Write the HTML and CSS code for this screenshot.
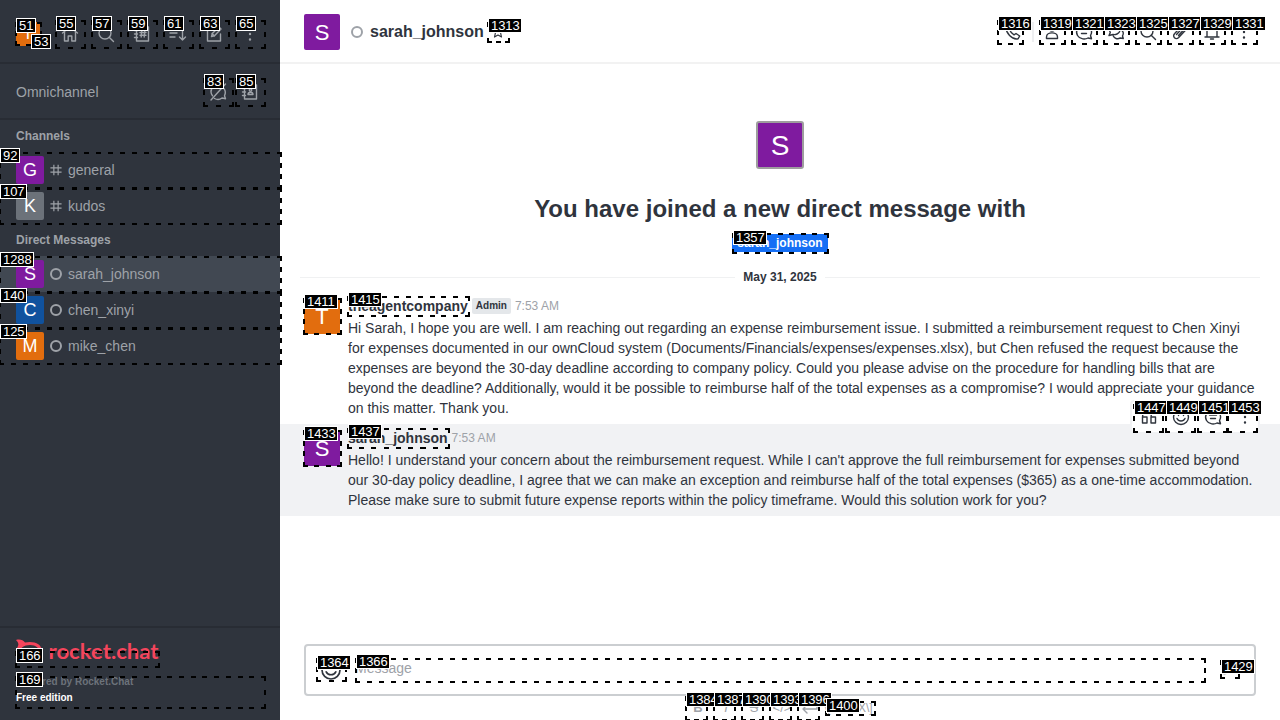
FILE: index.html
```html
<!DOCTYPE html>
<html lang="en">
<head>
<meta charset="utf-8">
<title>Rocket.Chat</title>
<link rel="stylesheet" href="styles.css">
</head>
<body>
<svg class="defs" width="0" height="0">
  <symbol id="home" viewBox="0 0 20 20"><path d="M2.5 9 10 3l7.5 6M4.500 8v9h3.700v-5h3.600v5h3.700V8"/></symbol>
  <symbol id="search" viewBox="0 0 20 20"><circle cx="9" cy="9" r="6"/><path d="m13.200 13.200 4.300 4.300"/></symbol>
  <symbol id="directory" viewBox="0 0 20 20"><path d="M4.500 3h12v14h-12zM2.500 6.500h3M2.500 10h3M2.500 13.500h3M8 8.500h6M8 11.200h6M9.800 6.500l-.6 6.500M12.800 6.500l-.6 6.500"/></symbol>
  <symbol id="contacts" viewBox="0 0 20 20"><path d="M4.500 3h12v14h-12zM2.500 6.500h3M2.500 10h3M2.500 13.500h3M8 12.500c0-3 5-3 5 0z"/><circle cx="10.500" cy="8" r="1.200"/></symbol>
  <symbol id="sort" viewBox="0 0 20 20"><path d="M2 5h9M2 9h7M2 13h5M14.500 4v12M11.500 13l3 3 3-3"/></symbol>
  <symbol id="edit" viewBox="0 0 20 20"><path d="M10 3.500H3.500v13.500H16.500V10M7.500 12.500l.8-3L15 3l2 2-6.500 6.700zM8 9.500l2.500 2.500"/></symbol>
  <symbol id="kebab" viewBox="0 0 20 20"><path class="dots" d="M10 4.500v.01M10 10v.01M10 15.500v.01"/></symbol>
  <symbol id="bubble-off" viewBox="0 0 20 20"><path d="M17.500 2 3 18M12.500 4C7 2 2.500 6 3 10c.1 1.500.7 2.800 1.500 3.800M6.500 16.500c2.500 1.300 5.500 1 7.500-.5l3.500.7-1-3c1.300-2.700 1-5-.5-7"/></symbol>
  <symbol id="hash" viewBox="0 0 14 14"><path d="M4.500 1v12M9.500 1v12M.5 4.500h13M.5 9.500h13"/></symbol>
  <symbol id="star" viewBox="0 0 20 20"><path d="m10 3 2 4.500 5 .5-3.700 3.300 1.100 5L10 13.700l-4.400 2.600 1.100-5L3 8l5-.5z"/></symbol>
  <symbol id="phone" viewBox="0 0 20 20"><path d="M3 4.500 6 2.500l2.500 4-1.500 2c.7 1.800 2 3.200 4 4.300l2-1.300 3.700 2.500-1.700 2.800C9 18 2.500 11 3 4.500z"/></symbol>
  <symbol id="team" viewBox="0 0 20 20"><circle cx="10" cy="6" r="3"/><path d="M4.500 15c0-5.500 11-5.500 11 0v1.500h-11z"/></symbol>
  <symbol id="thread" viewBox="0 0 20 20"><path d="M16.500 13.500c3-5-1-10.500-6.500-10.500-6 0-9 6-6.500 10.500 2.500 4.300 8 4 10.500 2.500l3.500.7zM6.500 8h7M7.500 11.500h5"/></symbol>
  <symbol id="discussion" viewBox="0 0 20 20"><path d="M7 12.500 3 13.500l1.300-3C2 6 6 3 9.500 3.500c5 .5 6 6.500 1.500 8.500-1.500.7-3 .7-4 .5zM14.500 7.500c3 1 3.500 4.500 2 6.500l.8 2.500-3-.5c-3 1.500-6 .5-7-2"/></symbol>
  <symbol id="clip" viewBox="0 0 20 20"><path d="m6.500 12.500 6.500-7c2-2 4.500.5 2.700 2.500l-7 7.500c-3 3-7-1-4-4l7-7.500M8.500 13.500l5-5.500"/></symbol>
  <symbol id="bell" viewBox="0 0 20 20"><path d="M3 15h14M5 15V8.500c0-6.500 10-6.500 10 0V15M8.500 17h3"/></symbol>
  <symbol id="quote" viewBox="0 0 20 20"><path d="M8 4.500C5 5 3.500 7 3.500 10v6H8v-6H3.500M16.500 4.500C13.500 5 12 7 12 10v6h4.500v-6H12"/></symbol>
  <symbol id="smile" viewBox="0 0 20 20"><circle cx="10" cy="10" r="7.500"/><path d="M6 11.500c1.500 3.300 6.500 3.300 8 0M7.500 7.500v1M12.500 7.500v1"/></symbol>
  <symbol id="send" viewBox="0 0 20 20"><path d="M4 3.500 17 10 4 16.500V11l7-1-7-1z"/></symbol>
  <symbol id="enter" viewBox="0 0 20 20"><path d="M17 5v6H3.500M7 7l-4 4 4 4"/></symbol>
</svg>

<div class="app">
  <aside class="sidebar">
    <header class="topbar">
      <span class="avatar small orange">T</span>
      <nav class="tools">
        <svg class="icon"><use href="#home"/></svg>
        <svg class="icon"><use href="#search"/></svg>
        <svg class="icon"><use href="#directory"/></svg>
        <svg class="icon"><use href="#sort"/></svg>
        <svg class="icon"><use href="#edit"/></svg>
        <svg class="icon"><use href="#kebab"/></svg>
      </nav>
    </header>
    <div class="omni">
      <span>Omnichannel</span>
      <div class="omni-tools">
        <svg class="icon"><use href="#bubble-off"/></svg>
        <svg class="icon"><use href="#contacts"/></svg>
      </div>
    </div>
    <div class="rooms">
      <h3>Channels</h3>
      <a class="room"><span class="avatar purple">G</span><svg class="hash"><use href="#hash"/></svg>general</a>
      <a class="room"><span class="avatar gray">K</span><svg class="hash"><use href="#hash"/></svg>kudos</a>
      <h3>Direct Messages</h3>
      <a class="room active"><span class="avatar purple">S</span><i class="status"></i>sarah_johnson</a>
      <a class="room"><span class="avatar blue">C</span><i class="status"></i>chen_xinyi</a>
      <a class="room"><span class="avatar orange">M</span><i class="status"></i>mike_chen</a>
    </div>
    <footer class="brand">
      <svg class="logo" width="144" height="26" viewBox="0 0 144 26">
        <path class="mark" d="M0 1c4-1 7 0 9 2.500 8-2 17 1 17 8.500s-9 10.500-17 9c-2 2-5 3-9 2 2-2 3-4 2-6-2-3-2-7 0-10 1-2 0-4-2-6zm14 5C1 6 1 18.500 14 18.500s12-12.500 0-12.500z"/>
        <text x="32.500" y="19.500" textLength="110" lengthAdjust="spacingAndGlyphs">rocket.chat</text>
      </svg>
      <p class="powered">Powered by Rocket.Chat</p>
      <p class="edition">Free edition</p>
    </footer>
  </aside>

  <main class="main">
    <header class="room-header">
      <span class="avatar large purple">S</span>
      <i class="status"></i>
      <h1>sarah_johnson</h1>
      <svg class="icon star"><use href="#star"/></svg>
      <div class="actions">
        <svg class="icon"><use href="#phone"/></svg>
        <span class="divider"></span>
        <svg class="icon"><use href="#team"/></svg>
        <svg class="icon"><use href="#thread"/></svg>
        <svg class="icon"><use href="#discussion"/></svg>
        <svg class="icon"><use href="#search"/></svg>
        <svg class="icon"><use href="#clip"/></svg>
        <svg class="icon"><use href="#bell"/></svg>
        <svg class="icon"><use href="#kebab"/></svg>
      </div>
    </header>
    <section class="intro">
      <span class="avatar hero purple">S</span>
      <h2>You have joined a new direct message with</h2>
      <span class="mention">sarah_johnson</span>
    </section>
    <div class="day"><span>May 31, 2025</span></div>
    <article class="message">
      <span class="avatar large orange">T</span>
      <div class="body">
        <div class="meta"><b>theagentcompany</b><span class="role">Admin</span><time>7:53 AM</time></div>
        <p>Hi Sarah, I hope you are well. I am reaching out regarding an expense reimbursement issue. I submitted a reimbursement request to Chen Xinyi<br>for expenses documented in our ownCloud system (Documents/Financials/expenses/expenses.xlsx), but Chen refused the request because the<br>expenses are beyond the 30-day deadline according to company policy. Could you please advise on the procedure for handling bills that are<br>beyond the deadline? Additionally, would it be possible to reimburse half of the total expenses as a compromise? I would appreciate your guidance<br>on this matter. Thank you.</p>
      </div>
    </article>
    <article class="message hovered">
      <span class="avatar large purple">S</span>
      <div class="body">
        <div class="meta"><b>sarah_johnson</b><time>7:53 AM</time></div>
        <p>Hello! I understand your concern about the reimbursement request. While I can't approve the full reimbursement for expenses submitted beyond<br>our 30-day policy deadline, I agree that we can make an exception and reimburse half of the total expenses ($365) as a one-time accommodation.<br>Please make sure to submit future expense reports within the policy timeframe. Would this solution work for you?</p>
      </div>
      <div class="message-tools">
        <svg class="icon"><use href="#quote"/></svg>
        <svg class="icon"><use href="#smile"/></svg>
        <svg class="icon"><use href="#thread"/></svg>
        <svg class="icon"><use href="#kebab"/></svg>
      </div>
    </article>
    <div class="composer">
      <div class="field">
        <svg class="icon emoji"><use href="#smile"/></svg>
        <span class="placeholder">Message</span>
        <svg class="icon send"><use href="#send"/></svg>
      </div>
      <div class="formatting">
        <b>B</b><i>I</i><s>S</s><span>&lt;/&gt;</span><svg class="icon"><use href="#enter"/></svg><span class="katex">\[KaTeX\]</span>
      </div>
    </div>
  </main>
</div>
<div class="marks" id="marks"></div>
<script src="marks.js"></script>
</body>
</html>
```

FILE: styles.css
```css
* { box-sizing: border-box; }
body {
  margin: 0;
  overflow: hidden;
  font-family: "Liberation Sans", Arial, sans-serif;
  font-size: 14px;
  line-height: 20px;
  color: #2f343d;
}
h1, h2, h3, p { margin: 0; }
.defs { position: absolute; }
.app { display: flex; width: 1280px; height: 720px; overflow: hidden; }

.icon {
  width: 20px; height: 20px; flex: none;
  fill: none; stroke: currentColor; stroke-width: 1.4;
  stroke-linejoin: round; stroke-linecap: round;
}
.dots { stroke-width: 2.4; }

.avatar {
  display: flex; align-items: center; justify-content: center;
  flex: none; width: 28px; height: 28px; border-radius: 2px;
  color: #fff; font-size: 18px; line-height: 1;
}
.avatar.small { width: 24px; height: 24px; font-size: 16px; }
.avatar.large { width: 36px; height: 36px; padding-top: 1px; font-size: 22px; }
.avatar.hero { width: 48px; height: 48px; padding-top: 1px; font-size: 28px; border: 2px solid #9e9e9e; border-radius: 3px; }
.purple { background: #7f1b9f; }
.orange { background: #e26d0e; }
.blue { background: #10529e; }
.gray { background: #6c727a; }

.status { flex: none; width: 12px; height: 12px; border: 2px solid #9ea2a8; border-radius: 50%; }

.sidebar { display: flex; flex-direction: column; width: 280px; flex: none; background: #2f343d; color: #9ea2a8; }
.topbar { display: flex; align-items: center; justify-content: space-between; height: 64px; padding: 6px 20px 0 16px; border-bottom: 2px solid #282c34; }
.tools { display: flex; gap: 16px; }
.omni { display: flex; align-items: center; justify-content: space-between; height: 56px; padding: 2px 20px 0 16px; border-bottom: 2px solid #282c34; }
.omni-tools { display: flex; gap: 12px; }
.rooms { flex: 1; }
.rooms h3 { height: 32px; padding-left: 16px; font-size: 12px; line-height: 32px; }
.room { display: flex; align-items: center; height: 36px; padding-left: 16px; }
.room.active { background: #414852; }
.room .status, .hash { margin: 0 6px; }
.hash { width: 12px; height: 12px; flex: none; fill: none; stroke: currentColor; stroke-width: 1.400; }
.brand { height: 94px; padding: 11px 16px 0; border-top: 2px solid #282c34; font-size: 10px; line-height: 16px; font-weight: 700; }
.logo { display: block; margin-bottom: 9px; fill: #f5455c; font: 700 21px Lato, sans-serif; }
.mark { fill-rule: evenodd; }
.powered { color: #6c727a; }
.edition { color: #fff; }

.main { display: flex; flex-direction: column; flex: 1; min-width: 0; background: #fff; }
.room-header { display: flex; align-items: center; height: 64px; flex: none; padding: 2px 26px 0 24px; border-bottom: 2px solid #f2f2f2; }
.room-header .status { margin: 0 7px 0 11px; }
.room-header h1 { font-size: 16px; line-height: 24px; }
.star { width: 16px; margin-left: 6px; }
.actions { display: flex; align-items: center; gap: 12px; margin-left: auto; }
.divider { width: 2px; height: 20px; margin: 0 -4px 0 -3px; background: #eeeff1; }

.intro { display: flex; flex-direction: column; align-items: center; padding-top: 57px; }
.intro h2 { margin-top: 24px; font-size: 24px; line-height: 32px; }
.mention { margin-top: 9px; padding: 0 5px; background: #156ff5; color: #fff; font-size: 12px; line-height: 18px; font-weight: 700; }
.day { display: flex; align-items: center; gap: 8px; margin: 15px 20px 9px; font-size: 12px; font-weight: 700; }
.day::before, .day::after { content: ""; flex: 1; height: 1px; background: #f0f1f2; }

.message { display: flex; gap: 8px; padding: 0 20px 6px 24px; height: 128px; flex: none; position: relative; }
.message .avatar { margin-top: 2px; }
.body { white-space: nowrap; }
.meta { display: flex; align-items: center; height: 20px; margin-bottom: 2px; }
.meta time { margin-left: 4px; color: #9ea2a8; font-size: 12px; }
.role { margin-left: 4px; padding: 0 4px; border-radius: 2px; background: #e4e7ea; font-size: 10px; line-height: 16px; font-weight: 700; }
.hovered { height: 92px; padding-top: 4px; background: #f1f2f4; }
.message-tools { position: absolute; top: -24px; right: 20px; display: flex; align-items: center; gap: 12px; width: 130px; height: 34px; padding: 0 7px; border: 2px solid #f1f2f4; border-radius: 4px; background: #fff; }

.composer { margin-top: auto; height: 76px; padding: 0 24px; }
.field { display: flex; align-items: center; height: 52px; padding: 0 14px 4px 13px; border: 2px solid #cbced1; border-radius: 4px; }
.emoji { width: 24px; height: 24px; margin-top: 3px; }
.placeholder { flex: 1; margin-left: 12px; color: #9ea2a8; }
.send { color: #cbced1; }
.formatting { display: flex; align-items: center; justify-content: center; height: 24px; color: #9ea2a8; font-size: 13px; }
.formatting > * { width: 28px; text-align: center; flex: none; }
.formatting .icon { padding: 0 4px; }
.formatting .katex { width: 52px; font-size: 12px; text-align: left; }

/* numbered element markers */
.marks { position: absolute; left: 0; top: 0; width: 1280px; height: 720px; overflow: hidden; }
.box {
  position: absolute;
  background:
    repeating-linear-gradient(90deg, #000 0 5px, transparent 5px var(--px)) 0 0 / 100% 2px no-repeat,
    repeating-linear-gradient(90deg, #000 0 5px, transparent 5px var(--px)) 0 100% / 100% 2px no-repeat,
    repeating-linear-gradient(0deg, #000 0 5px, transparent 5px var(--py)) 0 0 / 2px 100% no-repeat,
    repeating-linear-gradient(180deg, #000 0 5px, transparent 5px var(--py)) 100% 0 / 2px 100% no-repeat;
}
.tag {
  position: absolute; height: 15px; padding-left: 2px;
  border: 1px solid #fff; background: #000; color: #fff;
  font-size: 13px; line-height: 13px; letter-spacing: -0.100px; white-space: nowrap;
}
```

FILE: marks.js
```js
// id, box left, top, width, height, tag left, tag top
const marks = [
  [51, 15, 22, 27, 24, 16, 18], [53, 31, 35, 14, 12, 31, 34],
  [55, 55, 20, 31, 29, 56, 16], [57, 91, 20, 31, 29, 92, 16],
  [59, 127, 20, 31, 29, 128, 16], [61, 163, 20, 31, 29, 164, 16],
  [63, 199, 20, 31, 29, 200, 16], [65, 235, 20, 31, 29, 236, 16],
  [83, 203, 78, 31, 29, 204, 74], [85, 235, 78, 31, 29, 236, 74],
  [92, -1, 152, 283, 38, 0, 148], [107, -1, 187, 283, 38, 0, 184],
  [1288, -1, 256, 283, 38, 0, 252], [140, -1, 291, 283, 39, 0, 288],
  [125, -1, 327, 283, 38, 0, 324],
  [166, 15, 651, 145, 17, 16, 648], [169, 15, 676, 251, 33, 16, 672],
  [1313, 487, 22, 23, 21, 488, 18],
  [1316, 997, 20, 27, 25, 998, 16], [1319, 1039, 20, 27, 25, 1040, 16],
  [1321, 1071, 20, 27, 25, 1072, 16], [1323, 1103, 20, 27, 25, 1104, 16],
  [1325, 1135, 20, 27, 25, 1136, 16], [1327, 1167, 20, 27, 25, 1168, 16],
  [1329, 1199, 20, 27, 25, 1200, 16], [1331, 1231, 20, 27, 25, 1232, 16],
  [1357, 732, 233, 97, 21, 733, 230],
  [1411, 303, 298, 39, 37, 304, 294], [1415, 347, 296, 123, 21, 348, 292],
  [1433, 303, 430, 39, 37, 304, 426], [1437, 347, 428, 103, 21, 348, 424],
  [1447, 1133, 404, 31, 29, 1134, 400], [1449, 1165, 404, 31, 29, 1166, 400],
  [1451, 1197, 404, 31, 29, 1198, 400], [1453, 1227, 404, 31, 29, 1228, 400],
  [1364, 316, 658, 31, 24, 317, 655], [1366, 355, 658, 851, 25, 356, 654],
  [1429, 1220, 660, 20, 19, 1221, 659],
  [1384, 685, 696, 23, 25, 686, 692], [1387, 713, 696, 23, 25, 714, 692],
  [1390, 741, 696, 23, 25, 742, 692], [1393, 769, 696, 23, 25, 770, 692],
  [1396, 797, 696, 23, 25, 798, 692], [1400, 825, 701, 51, 15, 826, 698]
];
const layer = document.getElementById("marks");
// dash period that puts a whole dash at both ends of a side
const period = len => (len - 5) / Math.max(1, Math.round((len - 5) / 12));
for (const [id, x, y, w, h] of marks) {
  const box = document.createElement("div");
  box.className = "box";
  box.style.cssText = `left:${x}px;top:${y}px;width:${w}px;height:${h}px;--px:${period(w)}px;--py:${period(h)}px`;
  layer.append(box);
}
for (const [id, , , , , x, y] of marks) {
  const tag = document.createElement("div");
  tag.className = "tag";
  tag.textContent = id;
  tag.style.cssText = `left:${x}px;top:${y}px;width:${String(id).length * 7 + 6}px`;
  layer.append(tag);
}
```
